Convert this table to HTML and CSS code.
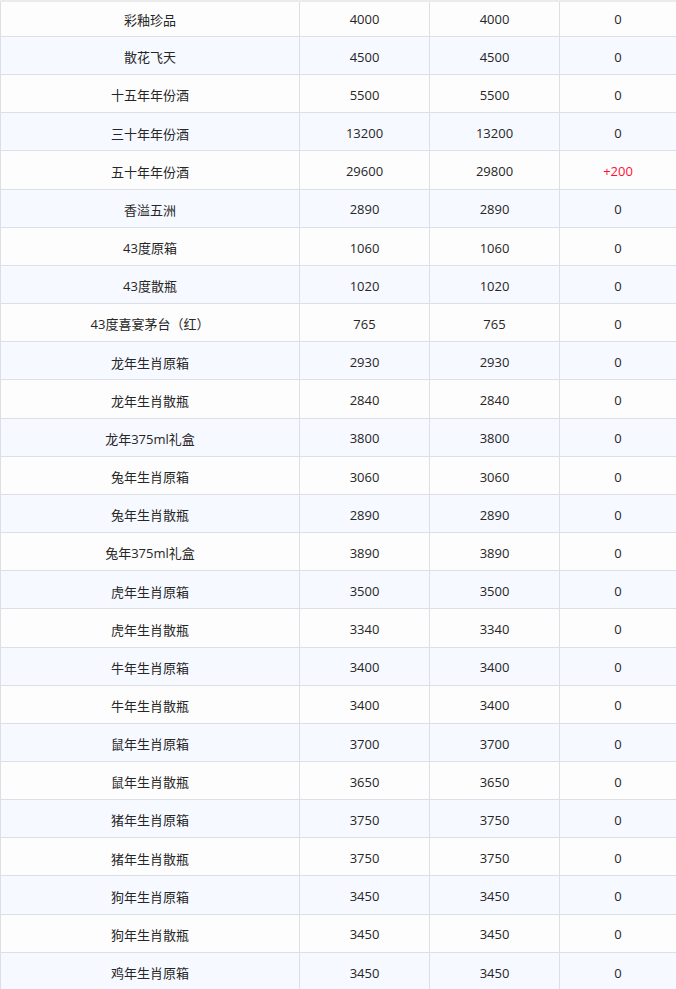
FILE: index.html
```html
<!DOCTYPE html>
<html lang="zh-CN">
<head>
<meta charset="utf-8">
<title>价格表</title>
<link rel="stylesheet" href="styles.css">
</head>
<body>
<div class="top-strip"></div>
<div class="price-table">
  <div class="row first"><div class="cell">彩釉珍品</div><div class="cell">4000</div><div class="cell">4000</div><div class="cell">0</div></div>
  <div class="row alt"><div class="cell">散花飞天</div><div class="cell">4500</div><div class="cell">4500</div><div class="cell">0</div></div>
  <div class="row"><div class="cell">十五年年份酒</div><div class="cell">5500</div><div class="cell">5500</div><div class="cell">0</div></div>
  <div class="row alt"><div class="cell">三十年年份酒</div><div class="cell">13200</div><div class="cell">13200</div><div class="cell">0</div></div>
  <div class="row"><div class="cell">五十年年份酒</div><div class="cell">29600</div><div class="cell">29800</div><div class="cell up">+200</div></div>
  <div class="row alt"><div class="cell">香溢五洲</div><div class="cell">2890</div><div class="cell">2890</div><div class="cell">0</div></div>
  <div class="row"><div class="cell">43度原箱</div><div class="cell">1060</div><div class="cell">1060</div><div class="cell">0</div></div>
  <div class="row alt"><div class="cell">43度散瓶</div><div class="cell">1020</div><div class="cell">1020</div><div class="cell">0</div></div>
  <div class="row"><div class="cell">43度喜宴茅台（红）</div><div class="cell">765</div><div class="cell">765</div><div class="cell">0</div></div>
  <div class="row alt"><div class="cell">龙年生肖原箱</div><div class="cell">2930</div><div class="cell">2930</div><div class="cell">0</div></div>
  <div class="row"><div class="cell">龙年生肖散瓶</div><div class="cell">2840</div><div class="cell">2840</div><div class="cell">0</div></div>
  <div class="row alt"><div class="cell">龙年375ml礼盒</div><div class="cell">3800</div><div class="cell">3800</div><div class="cell">0</div></div>
  <div class="row"><div class="cell">兔年生肖原箱</div><div class="cell">3060</div><div class="cell">3060</div><div class="cell">0</div></div>
  <div class="row alt"><div class="cell">兔年生肖散瓶</div><div class="cell">2890</div><div class="cell">2890</div><div class="cell">0</div></div>
  <div class="row"><div class="cell">兔年375ml礼盒</div><div class="cell">3890</div><div class="cell">3890</div><div class="cell">0</div></div>
  <div class="row alt"><div class="cell">虎年生肖原箱</div><div class="cell">3500</div><div class="cell">3500</div><div class="cell">0</div></div>
  <div class="row"><div class="cell">虎年生肖散瓶</div><div class="cell">3340</div><div class="cell">3340</div><div class="cell">0</div></div>
  <div class="row alt"><div class="cell">牛年生肖原箱</div><div class="cell">3400</div><div class="cell">3400</div><div class="cell">0</div></div>
  <div class="row"><div class="cell">牛年生肖散瓶</div><div class="cell">3400</div><div class="cell">3400</div><div class="cell">0</div></div>
  <div class="row alt"><div class="cell">鼠年生肖原箱</div><div class="cell">3700</div><div class="cell">3700</div><div class="cell">0</div></div>
  <div class="row"><div class="cell">鼠年生肖散瓶</div><div class="cell">3650</div><div class="cell">3650</div><div class="cell">0</div></div>
  <div class="row alt"><div class="cell">猪年生肖原箱</div><div class="cell">3750</div><div class="cell">3750</div><div class="cell">0</div></div>
  <div class="row"><div class="cell">猪年生肖散瓶</div><div class="cell">3750</div><div class="cell">3750</div><div class="cell">0</div></div>
  <div class="row alt"><div class="cell">狗年生肖原箱</div><div class="cell">3450</div><div class="cell">3450</div><div class="cell">0</div></div>
  <div class="row"><div class="cell">狗年生肖散瓶</div><div class="cell">3450</div><div class="cell">3450</div><div class="cell">0</div></div>
  <div class="row alt"><div class="cell">鸡年生肖原箱</div><div class="cell">3450</div><div class="cell">3450</div><div class="cell">0</div></div>
</div>
</body>
</html>
```
FILE: styles.css
```css
html, body {
  margin: 0;
  padding: 0;
  background: #fdfdfd;
}
body {
  font-family: "Open Sans", "Noto Sans CJK SC", sans-serif;
  font-size: 13px;
  color: #262626;
  overflow: hidden;
}
.top-strip {
  height: 2px;
  background: #ebebeb;
}
.price-table {
  width: 676px;
}
.row {
  display: grid;
  grid-template-columns: 299px 130px 130px 1fr;
  height: 38.17px;
  box-sizing: border-box;
  border-bottom: 1px solid #dcdfe6;
  background: #fdfdfd;
}
.row.first {
  height: 35px;
}
.row.alt {
  background: #f6f9ff;
}
.cell {
  border-left: 1px solid #dcdfe6;
  display: flex;
  align-items: center;
  justify-content: center;
  padding-top: 2.5px;
  box-sizing: border-box;
  white-space: nowrap;
}
.row.first .cell {
  padding-top: 0;
}
.cell.up {
  color: #ff1030;
}
```
